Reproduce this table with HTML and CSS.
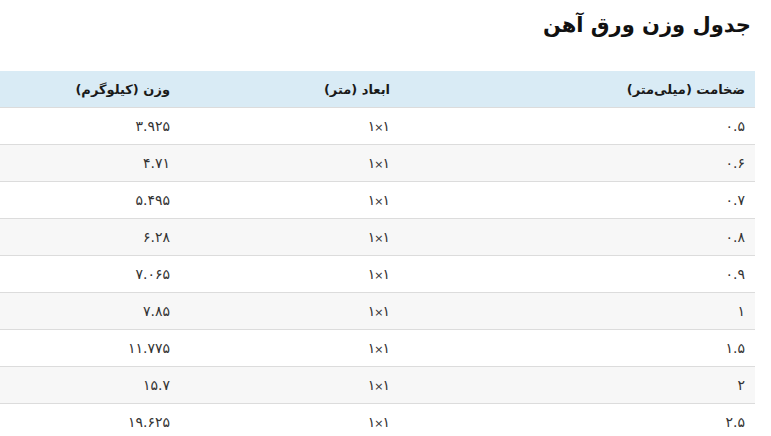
FILE: index.html
```html
<!DOCTYPE html>
<html lang="fa" dir="rtl">
<head>
<meta charset="utf-8">
<link rel="stylesheet" href="styles.css">
</head>
<body>
<div class="page">
  <h1 class="title">جدول وزن ورق آهن</h1>
  <table class="weights">
    <thead>
      <tr><th class="c1">ضخامت (میلی‌متر)</th><th class="c2">ابعاد (متر)</th><th class="c3">وزن (کیلوگرم)</th></tr>
    </thead>
    <tbody>
      <tr><td>۰.۵</td><td>۱<span class="x">×</span>۱</td><td>۳.۹۲۵</td></tr>
      <tr><td>۰.۶</td><td>۱<span class="x">×</span>۱</td><td>۴.۷۱</td></tr>
      <tr><td>۰.۷</td><td>۱<span class="x">×</span>۱</td><td>۵.۴۹۵</td></tr>
      <tr><td>۰.۸</td><td>۱<span class="x">×</span>۱</td><td>۶.۲۸</td></tr>
      <tr><td>۰.۹</td><td>۱<span class="x">×</span>۱</td><td>۷.۰۶۵</td></tr>
      <tr><td>۱</td><td>۱<span class="x">×</span>۱</td><td>۷.۸۵</td></tr>
      <tr><td>۱.۵</td><td>۱<span class="x">×</span>۱</td><td>۱۱.۷۷۵</td></tr>
      <tr><td>۲</td><td>۱<span class="x">×</span>۱</td><td>۱۵.۷</td></tr>
      <tr><td>۲.۵</td><td>۱<span class="x">×</span>۱</td><td>۱۹.۶۲۵</td></tr>
    </tbody>
  </table>
</div>
</body>
</html>
```
FILE: styles.css
```css
html, body {
  margin: 0;
  padding: 0;
  background: #fff;
}
body {
  font-family: "DejaVu Sans", "Noto Sans", sans-serif;
  color: #222;
  overflow: hidden;
}
.page {
  width: 755px;
  margin-right: 16px;
  padding-top: 9px;
}
.title {
  margin: 0 4px 0 0;
  font-size: 21px;
  font-weight: bold;
  line-height: 32px;
  color: #111;
  height: 62px;
}
.weights {
  width: 755px;
  border-collapse: collapse;
  table-layout: fixed;
}
.weights th {
  background: #d9ebf5;
  height: 36px;
  padding: 0 10px;
  text-align: right;
  font-size: 13px;
  font-weight: bold;
  color: #1a1a1a;
  border-bottom: 1px solid #dcdcdc;
}
.weights td {
  height: 36px;
  padding: 0 10px;
  text-align: right;
  font-size: 14px;
  color: #333;
  border-bottom: 1px solid #dcdcdc;
}
.weights .x {
  font-size: 11px;
  margin: 0 -1px;
}
.weights tbody tr:nth-child(even) td {
  background: #f7f7f7;
}
.c1 { width: 335px; }
.c2 { width: 200px; }
.c3 { width: 160px; }
```
